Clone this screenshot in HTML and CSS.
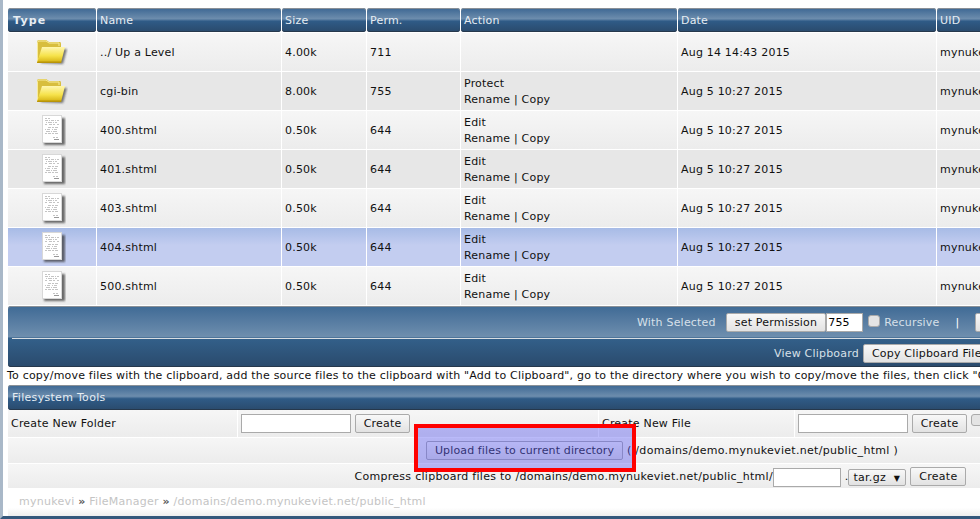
FILE: index.html
```html
<!DOCTYPE html>
<html lang="en">
<head>
  <meta charset="UTF-8">
  <title>File Manager</title>
  <link rel="stylesheet" href="styles.css">
</head>
<body>
  <svg class="defs" width="0" height="0">
    <defs>
      <linearGradient id="folder-front" x1="0" y1="0" x2="0" y2="1">
        <stop offset="0" stop-color="#fff7b0"/>
        <stop offset="0.55" stop-color="#f6e24a"/>
        <stop offset="1" stop-color="#d2ae0c"/>
      </linearGradient>
      <filter id="blur-1"><feGaussianBlur stdDeviation="1"/></filter>
      <symbol id="folder" viewBox="0 0 32 28">
        <path d="M5 25 L7 11 H31 L27 26 Z" fill="#333" opacity=".65" filter="url(#blur-1)"/>
        <path d="M1 24 V4 Q1 2 3 2 H10 L13 4 H24 Q25 4 25 6 V9 H8 Z" fill="#d8be3e"/>
        <path d="M1.5 24 V4.5 Q1.5 3 3 3 H10 L13 5 H23 V8" fill="none" stroke="#f8ec9c"/>
        <path d="M1 25 L6 9 H29 L25 25 Z" fill="url(#folder-front)"/>
        <path d="M1 25 H25 L25.4 23.5 H1.6 Z" fill="#b89408"/>
      </symbol>
      <symbol id="doc" viewBox="-4 -1 28 33">
        <rect x="2" y="3" width="21" height="27" fill="#333" opacity=".7" filter="url(#blur-1)"/>
        <rect x="0.5" y="0.5" width="19" height="27" fill="#fff" stroke="#d8d8d8"/>
        <g stroke="#c4c4c4">
          <path d="M3 3.5H9" stroke-dasharray="2 1"/>
          <path d="M3 5.5H17" stroke-dasharray="3 1 1 1"/>
          <path d="M4 7.5H15" stroke-dasharray="1 1 4 1"/>
          <path d="M3 9.5H17" stroke-dasharray="2 2 3 1"/>
          <path d="M6 12.5H17" stroke-dasharray="3 1 2 1"/>
          <path d="M3 14.5H17" stroke-dasharray="1 1 3 2"/>
          <path d="M4 16.5H16" stroke-dasharray="4 1 1 1"/>
          <path d="M3 18.5H17" stroke-dasharray="2 1 3 1"/>
          <path d="M11 22.5H17" stroke-dasharray="2 1"/>
          <path d="M12 24.5H17" stroke="#999"/>
        </g>
      </symbol>
    </defs>
  </svg>

  <div class="page">
    <table class="files">
      <colgroup>
        <col class="col-type"><col class="col-name"><col class="col-size"><col class="col-perm">
        <col class="col-action"><col class="col-date"><col class="col-uid"><col class="col-rest">
      </colgroup>
      <thead>
        <tr>
          <th class="type-head">Type</th><th>Name</th><th>Size</th><th>Perm.</th>
          <th>Action</th><th>Date</th><th>UID</th><th>GID</th>
        </tr>
      </thead>
      <tbody>
        <tr class="odd">
          <td class="icon"><svg width="32" height="28"><use href="#folder"/></svg></td>
          <td>../ Up a Level</td><td>4.00k</td><td>711</td><td></td>
          <td>Aug 14 14:43 2015</td><td>mynukevi</td><td>mynukevi</td>
        </tr>
        <tr class="even">
          <td class="icon"><svg width="32" height="28"><use href="#folder"/></svg></td>
          <td>cgi-bin</td><td>8.00k</td><td>755</td><td>Protect<br>Rename | Copy</td>
          <td>Aug 5 10:27 2015</td><td>mynukevi</td><td>mynukevi</td>
        </tr>
        <tr class="odd">
          <td class="icon"><svg width="28" height="33"><use href="#doc"/></svg></td>
          <td>400.shtml</td><td>0.50k</td><td>644</td><td>Edit<br>Rename | Copy</td>
          <td>Aug 5 10:27 2015</td><td>mynukevi</td><td>mynukevi</td>
        </tr>
        <tr class="even">
          <td class="icon"><svg width="28" height="33"><use href="#doc"/></svg></td>
          <td>401.shtml</td><td>0.50k</td><td>644</td><td>Edit<br>Rename | Copy</td>
          <td>Aug 5 10:27 2015</td><td>mynukevi</td><td>mynukevi</td>
        </tr>
        <tr class="odd">
          <td class="icon"><svg width="28" height="33"><use href="#doc"/></svg></td>
          <td>403.shtml</td><td>0.50k</td><td>644</td><td>Edit<br>Rename | Copy</td>
          <td>Aug 5 10:27 2015</td><td>mynukevi</td><td>mynukevi</td>
        </tr>
        <tr class="selected">
          <td class="icon"><svg width="28" height="33"><use href="#doc"/></svg></td>
          <td>404.shtml</td><td>0.50k</td><td>644</td><td>Edit<br>Rename | Copy</td>
          <td>Aug 5 10:27 2015</td><td>mynukevi</td><td>mynukevi</td>
        </tr>
        <tr class="odd">
          <td class="icon"><svg width="28" height="33"><use href="#doc"/></svg></td>
          <td>500.shtml</td><td>0.50k</td><td>644</td><td>Edit<br>Rename | Copy</td>
          <td>Aug 5 10:27 2015</td><td>mynukevi</td><td>mynukevi</td>
        </tr>
      </tbody>
    </table>

    <div class="actions">
      <div class="action-row action-top">
        <span>With Selected</span>
        <span class="joined">
          <button class="btn">set Permission</button><input class="text-in perm-in" type="text" value="755">
        </span>
        <input class="check" type="checkbox">
        <span>Recursive</span>
        <span class="sep">|</span>
        <button class="btn">Delete</button>
      </div>
      <div class="action-row action-bottom">
        <span>View Clipboard</span>
        <button class="btn">Copy Clipboard Files</button>
      </div>
    </div>

    <p class="note">To copy/move files with the clipboard, add the source files to the clipboard with "Add to Clipboard", go to the directory where you wish to copy/move the files, then click "Copy Clipboard Files".</p>

    <div class="tools-title">Filesystem Tools</div>
    <table class="tools">
      <colgroup>
        <col class="tool-label"><col class="tool-field"><col class="tool-label-2"><col class="tool-field-2">
      </colgroup>
      <tr class="tool-create">
        <td>Create New Folder</td>
        <td><input class="text-in name-in" type="text"> <button class="btn">Create</button></td>
        <td>Create New File</td>
        <td><input class="text-in name-in" type="text"> <button class="btn">Create</button> <input class="check" type="checkbox"></td>
      </tr>
      <tr class="tool-upload">
        <td class="center" colspan="4"><button class="btn">Upload files to current directory</button> ( /domains/demo.mynukeviet.net/public_html )</td>
      </tr>
      <tr class="tool-compress">
        <td class="center" colspan="4">Compress clipboard files to /domains/demo.mynukeviet.net/public_html/<input class="text-in zip-in" type="text"> .<span class="select">tar.gz <i>▼</i></span> <button class="btn">Create</button></td>
      </tr>
    </table>

    <div class="crumbs">mynukevi <b>»</b> FileManager <b>»</b> /domains/demo.mynukeviet.net/public_html</div>
  </div>

  <div class="mark"></div>
</body>
</html>
```

FILE: styles.css
```css
html, body {
  margin: 0;
  height: 519px;
  overflow: hidden;
  background: #fff;
}
body {
  font-family: "DejaVu Sans", sans-serif;
  font-size: 11px;
  letter-spacing: 0.2px;
  color: #111;
  position: relative;
}
.defs {
  position: absolute;
}

.page {
  width: 1307px;
  height: 519px;
  padding: 8px 0 0 8px;
  border-left: 3px solid #a9b8c8;
  border-bottom: 3px solid #34587c;
  box-sizing: border-box;
}

/* file list */
.files {
  border-collapse: separate;
  border-spacing: 1px;
  table-layout: fixed;
  width: 1307px;
  margin: -1px 0 0 -4px;
}
.col-type { width: 88px; }
.col-name { width: 184px; }
.col-size { width: 84px; }
.col-perm { width: 93px; }
.col-action { width: 216px; }
.col-date { width: 258px; }
.col-uid { width: 100px; }
.files th {
  height: 24px;
  padding: 0 3px;
  text-align: left;
  font-weight: normal;
  color: #e6edf3;
  background: linear-gradient(#3c6793, #6d8dad 45%, #2f5b87 55%, #2a4a6c);
  border-radius: 3px;
  box-shadow: inset 0 -1px #26384c, inset 0 1px #8a9097;
}
.files th.type-head {
  font-weight: bold;
  letter-spacing: 1.2px;
  padding-left: 5px;
}
.files td {
  height: 38px;
  padding: 1px 3px 0;
  line-height: 16px;
  box-sizing: border-box;
}
.files .odd td { background: linear-gradient(#f6f6f6, #ececec); }
.files .even td { background: #e7e7e7; }
.files .selected td { background: linear-gradient(#a7bbe6, #c3cdf0 45%); }
.files td.icon {
  text-align: center;
  padding: 0;
}
.icon svg {
  display: block;
  margin: 0 auto;
}

/* toolbar under the list */
.actions {
  margin-left: -3px;
  width: 1305px;
  height: 61px;
  box-sizing: border-box;
  border-radius: 3px;
  color: #d7e0e9;
  background: linear-gradient(#3f6a95, #6e8eae 50%, #33608a 53%, #2a4a6c);
  box-shadow: inset 0 -1px #26384c, inset 0 1px #8a9097;
}
.action-row {
  display: flex;
  align-items: center;
  box-sizing: border-box;
}
.action-top {
  gap: 10px;
  border-bottom: 1px solid #d8dde2;
  margin-left: 4px;
  padding-left: 625px;
  height: 33px;
}
.action-bottom {
  padding: 1px 0 0 766px;
  gap: 4px;
  height: 28px;
}
.joined {
  display: flex;
}
.action-top .check {
  margin: 0 -6px 3px -5px;
}
.sep {
  margin: 0 6px;
  color: #fff;
}

.btn {
  font: inherit;
  letter-spacing: inherit;
  color: #111;
  height: 19px;
  padding: 0 8px;
  white-space: nowrap;
  background: linear-gradient(#f8f8f8, #e2e2e2);
  border: 1px solid #aaa;
  border-radius: 2px;
}
.text-in {
  font: inherit;
  letter-spacing: inherit;
  height: 19px;
  padding: 0 1px;
  box-sizing: border-box;
  border: 1px solid #aaa;
  background: #fff;
  vertical-align: middle;
}
.perm-in { width: 37px; }
.name-in { width: 110px; }
.zip-in { width: 68px; }
.check {
  appearance: none;
  width: 12px;
  height: 12px;
  margin: 0;
  background: #e4e4e4;
  border: 1px solid #aaa;
  border-radius: 3px;
  vertical-align: top;
}

/* hint line */
.note {
  margin: 0 0 0 -4px;
  height: 18px;
  line-height: 17px;
  white-space: nowrap;
}

/* filesystem tools */
.tools-title {
  margin-left: -3px;
  width: 1305px;
  height: 25px;
  line-height: 25px;
  padding-left: 4px;
  box-sizing: border-box;
  letter-spacing: 0.3px;
  color: #e6edf3;
  border-radius: 3px;
  background: linear-gradient(#3c6793, #6d8dad 45%, #2f5b87 55%, #2a4a6c);
  box-shadow: inset 0 -1px #26384c, inset 0 1px #8a9097;
}
.tools {
  border-collapse: separate;
  border-spacing: 0;
  table-layout: fixed;
  width: 1305px;
  margin-left: -3px;
}
.tool-label { width: 229px; }
.tool-field { width: 361px; }
.tool-label-2 { width: 196px; }
.tools td {
  height: 26px;
  padding: 0 3px;
  box-sizing: border-box;
  background: linear-gradient(#f6f6f6, #ececec);
  border-bottom: 1px solid #fff;
  white-space: nowrap;
}
.tools .tool-create td { height: 28px; }
.tools .tool-upload td { letter-spacing: 0.3px; padding-left: 6px; }
.tools .tool-upload .btn { letter-spacing: 0.13px; }
.tools .tool-compress td { height: 25px; padding-top: 2px; letter-spacing: 0.28px; }
.tools td + td {
  border-left: 1px solid #fff;
}
.tools .center {
  text-align: center;
}
.select {
  display: inline-block;
  width: 58px;
  height: 17px;
  line-height: 16px;
  padding-left: 4px;
  box-sizing: border-box;
  text-align: left;
  border: 1px solid #aaa;
  border-radius: 2px;
  background: linear-gradient(#f8f8f8, #e2e2e2);
  vertical-align: middle;
}
.select i {
  font-style: normal;
  font-size: 8px;
  margin-left: 4px;
}

.crumbs {
  margin-left: -3px;
  height: 27px;
  line-height: 25px;
  padding-left: 11px;
  letter-spacing: 0.25px;
  color: #c4c4c4;
  background: linear-gradient(#fff 70%, #eee);
}
.crumbs b {
  color: #555;
}

/* annotation drawn over the screenshot */
.mark {
  position: absolute;
  left: 414px;
  top: 424px;
  width: 222px;
  height: 48px;
  box-sizing: border-box;
  border: 4px solid #f00;
  background: rgba(90, 90, 240, 0.42);
}
```
